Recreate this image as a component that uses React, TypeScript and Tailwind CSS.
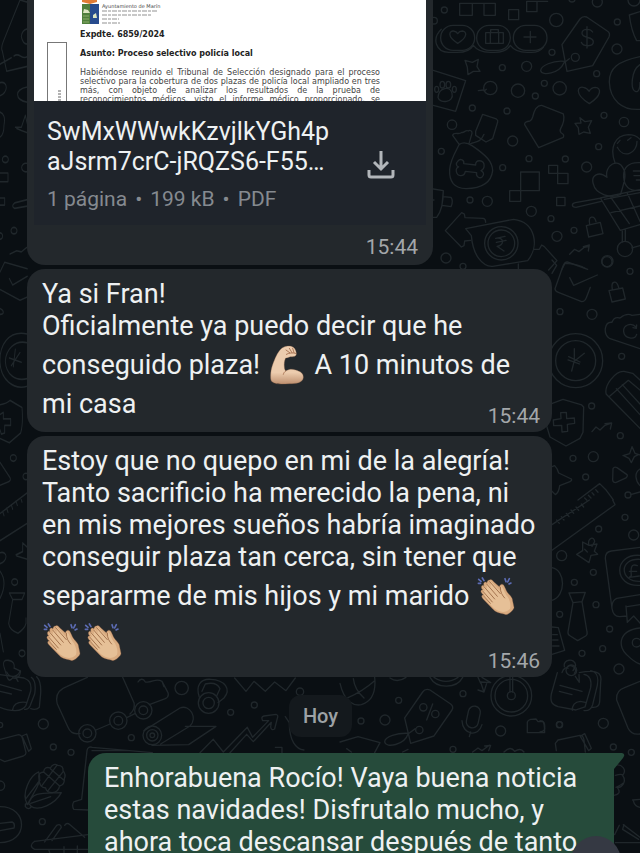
import React from 'react';

type Dot = [number, number, number];

const upperDots: Dot[] = [
  [43, 30, 9], [379, 60, 20], [562, 66, 9], [561, 147, 15], [366, 157, 9], [290, 199, 15], [217, 203, 9], [500, 221, 9],
  [343, 250, 9], [264, 272, 20], [389, 265, 20], [181, 264, 20], [316, 288, 9], [127, 324, 9], [231, 333, 9], [522, 346, 9],
  [582, 366, 14], [66, 374, 14], [248, 423, 15], [506, 440, 9], [34, 454, 9], [297, 476, 9], [406, 477, 9], [470, 501, 15],
  [218, 503, 9], [120, 600, 9], [172, 604, 15], [304, 634, 15], [363, 656, 9], [432, 691, 9], [381, 709, 15], [48, 774, 15],
  [99, 799, 9], [531, 785, 15], [502, 6, 15], [426, -3, 9], [612, 0, 18], [12, 62, 10], [585, 747, 23],
];

const middleDots: Dot[] = [
  [202, 4, 17], [270, 34, 9], [60, 155, 9], [156, 163, 15], [245, 289, 9], [155, 438, 9], [241, 527, 9], [99, 595, 9],
  [160, 590, 15], [137, 651, 9], [264, 705, 9],
];

const lowerDots: Dot[] = [
  [255, 52, 9], [176, 87, 9], [281, 105, 15], [65, 167, 15], [160, 217, 9], [103, 247, 9], [168, 314, 9], [59, 343, 9],
  [209, 387, 9], [188, 446, 9], [126, 460, 9], [237, 507, 15], [59, 674, 9], [190, 670, 15], [220, 741, 9], [274, 757, 9],
];

const bottomLeftDots: Dot[] = [
  [130, 162, 15], [160, 231, 9], [213, 247, 9], [394, 203, 9], [545, 54, 20], [692, 127, 9], [763, 105, 9], [127, 455, 9],
  [0, 347, 14], [0, 165, 8], [262, 190, 26], [262, 190, 13], [355, 152, 26], [355, 152, 13], [430, 121, 26], [430, 121, 13],
  [457, 196, 28], [457, 196, 17], [457, 196, 7], [626, 99, 31], [626, 99, 17], [900, 65, 11],
];

const bottomRightDots: Dot[] = [
  [63, 153, 9], [135, 150, 15], [176, 91, 9], [369, 71, 9], [482, 183, 15], [658, 164, 9], [339, 238, 9], [514, 77, 61],
  [514, 77, 49], [514, 77, 12], [250, 112, 11], [286, 132, 11], [238, 180, 11],
];

function Dots({ dots }: { dots: Dot[] }) {
  return (
    <>
      {dots.map(([x, y, r], i) => (
        <circle key={i} cx={x} cy={y} r={r} />
      ))}
    </>
  );
}

function Wallpaper() {
  return (
    <svg
      aria-hidden="true"
      className="absolute inset-0 h-full w-full"
      viewBox="0 0 640 853"
      preserveAspectRatio="xMidYMin slice"
      fill="none"
      stroke="#20272b"
      strokeLinecap="round"
      strokeLinejoin="round"
    >
      {/* Upper right */}
      <g transform="translate(430 0) scale(.3333)" strokeWidth="4">
        <Dots dots={upperDots} />
        <path d="M89 10h38v36H89zM162 10h34v36h-34zM127 10h35M236 29h30v30h-30zM290 4h31v31h-31zM321 4h32" />
        <rect x="32" y="76" width="102" height="75" rx="37" />
        <rect x="140" y="76" width="101" height="75" rx="37" />
        <rect x="250" y="76" width="101" height="75" rx="37" />
        <path d="M34 88c-30 28-16 69 22 69h26c23 0 39-5 48-21c12 16 28 21 50 21h14c23 0 38-6 47-21c12 16 27 21 50 21h14c14 0 26-4 35-15" />
        <path d="M83 130C48 108 60 92 70 93q10 1 13 8q5-8 14-8c13 1 18 18-14 37zM167 98h53v32h-53zM181 98v32M206 98v32M182 97v-8h23v8M301 94v34M282 111h36" />
        <path d="M411 214L396 134L450 57q8-10 20-6L532 93q10 6 5 18L488 197L411 214zM404 184c-36-4-72 14-72 28c4 18 56 8 70-24l16-12" />
        <circle cx="436" cy="172" r="12" />
        <path d="M488 96c-8-12-32-10-32 4c0 17 34 8 34 25c0 15-30 17-36 2M471 80v64" />
        <path d="M105 181l22 6 18-9-4 22 9 14-20 0-16 10-2-22zM145 272l16-2M163 273l6-5" />
        <path d="M10 211l97 31-30 92-67-18" />
        <path d="M24 292c3-32 37-34 42-12c8 28-38 32-42 12z" />
        <ellipse cx="37" cy="254" rx="7" ry="10" />
        <ellipse cx="55" cy="254" rx="7" ry="10" />
        <ellipse cx="20" cy="268" rx="6" ry="9" />
        <ellipse cx="73" cy="268" rx="6" ry="9" />
        <path d="M478 311c-49-31-33-54-18-49q12 2 17 12q7-12 19-12c18 1 21 24-18 49z" />
        <path d="M158 343l41 14q6 4 4 9l-15 50-20 10-31-20 0-12zM162 403c-12 28-26 20-42 29" />
        <path d="M88 434l-20-28c4-12 20 0 27-9c7 4 11-9 20-4c5-4 12 0 11 7l-9 31M88 433c11-7 26-4 38 4c44 30 61 48 62 75c-4 35-30 53-80 54c-35-1-51-20-49-58c2-29 19-55 29-75" />
        <path d="M101 491c3-11-10-17-17-8c-9 8-4 17 2 18c-12 4-8 25 5 26c11 1 14-8 15-13l34 4c-3 11 8 20 17 12c8-8 2-15-4-18c13-5 12-26 0-29c-13-3-17 5-16 12z" />
        <path d="M326 443L284 374q-2-9 16-11q5-2 8-12q8-36 27-35l65 26q6 18-8 44q-4 8 2 13q10 5 6 13z" />
        <path d="M450 353l15 12 20-3-10 20 6 18-20-4-14 7-2-19-10-14 18-1zM272 516h56v56h-56zM239 572h33v32h-33zM356 496h27v24h-27zM383 520h31v31h-31zM380 592h25v25h-25z" />
        <path d="M598 45l32-10M598 45q6 48 22 77h10M630 170c-66 14-92 34-92 76c2 54 38 86 92 82M630 194c-27 17-29 74-14 80c12 5 14-15 14-27" />
        <path d="M555 488c-17-45 0-82 40-84q22 0 35 14M562 442c18 36 60 18 59-18M562 430l8-9M593 421l10-8" />
        <path d="M490 552c-8-25 16-41 41-20c-9-35 34-60 48-28c14 18 0 53-7 79c-28 14-76 0-82-31zM630 488c-36-2-51 16-49 44c2 28 17 42 49 39M610 513h20M612 527h18M619 540h11" />
        <path d="M630 569l-119 25 60 97 59-17M523 598l107-20M543 593l55 78M592 580l38 84M543 638l87-20M515 594l-79 14c-12 2-12 14 2 14l76-18M577 692v34M586 690v34M606 744l24-7" />
        <path d="M469 677l42-10 8 34-43 10zM479 671c-5-24 14-26 19-6M419 763l15-15 13 7 16-13 12-2M460 740l18-5-3 18" />
        <path d="M10 567l30 5c0 26-4 60-20 80H10M40 572l-4 44M39 590l24 2q8 10 0 28l-27-4M12 600h-2M46 692l49-54 8 4 2 11 55 2q7 2 7 12M46 692l48 49 8-4 2-14 18-2" />
        <path d="M107 686l144-28c66 8 78 80 42 124L188 799c-30 2-59-32-64-92z" />
        <circle cx="214" cy="730" r="50" />
        <circle cx="214" cy="730" r="40" />
        <path d="M197 715l28-6M199 727l29-6M197 715c26-6 27 22 4 24l21 14M311 748h17l7-13 8 5 38 42-25 28M395 810l10-20q44 2 60 15M265 792v18" />
      </g>

      {/* Right edge, middle */}
      <g transform="translate(540 260) scale(.3333)" strokeWidth="4">
        <Dots dots={middleDots} />
        <path d="M143 28L82 6Q75 5 69 18L45 86q0 7 10 11l70 28q10 0 14-12l12-31M89 53l12 23 71-31M36 40l14-24L36 0" />
        <path d="M207 92l41-8 8 33-40 9zM217 88c-5-26 13-29 19-5" />
        <path d="M300 266l-92-31c-20-15-14-50 8-48q6-18 24-13q20-16 36-8l24-3M289 202c-17-18-40-5-38 13c2 21 34 26 39 8M290 195l-1 10-10-2" />
        <circle cx="107" cy="302" r="81" />
        <circle cx="107" cy="302" r="60" />
        <path d="M103 266v36l-8 31M103 304l30-24M86 290l34 16M84 300l34 12" />
        <path d="M199 403c-8-26 27-71 53-69l26 6 22 20M199 403l101 102M207 410l58-49 35 29M229 386l71 78M247 374l53 58" />
        <path d="M20 498c8-20 8-49 15-67l34-13 56 17 6 6-2 76-9 18-42 23-48-27zM62 458l17-1 1 19 23-2 1 16-22 3 1 21-17 2-1-20-24 1-1-17 23-4z" />
        <path d="M156 515l12-14 12 9 15-14 15-5M195 491l20-2-4 18M249 587l20-6 7-21 9 20 15 5M251 587l16 8 7 13 9-18 12-6" />
        <path d="M219 626q4-7 12-3l30 21q3 5-3 10l-31 14q-8 0-9-8zM300 627c-18 10-14 36 0 50M272 704l28-8M36 620l8-3q8 8 12 22l38 18q4 6-10 10l-25 10q-2 20-13 27l-10-10" />
        <path d="M114 720l65-49 20 20 21 29M134 714l7 7M145 706l8 8M156 698l6 7M167 689l7 8" />
      </g>

      {/* Right edge, lower */}
      <g transform="translate(540 500) scale(.3333)" strokeWidth="4">
        <Dots dots={lowerDots} />
        <path d="M36 74L148 0M36 151L225 14l-7-14M50 60l8 10M64 50l8 10M79 40l8 10M93 30l8 10M108 21l8 10M124 12l7 9" />
        <path d="M110 163l18-11 0-26 19 10 24-4-8 22 10 9-20 3-6 22zM146 134c-3-22 17-26 18-9l-8 14M134 148l8 8" />
        <path d="M300 142l-86 11q-18 2-18 22l20 150q4 26 24 25l20-2M300 284l-70 11q-16 8-14 30M300 166c-82-6-80 96 0 90M300 178c-64-4-62 68 0 66M292 197c-20-8-20 10-18 30l-6 5 30-4M268 214h22M258 318l4 49 19-19 19 21M262 320l38-6" />
        <path d="M36 203c42 8 42 86 0 98M87 279l49-2-10 28-27 3zM99 308L84 396q-1 8 7 12l22 14 24-14q6-4 4-12l-15-91M36 381l19 2 19 68-38 12M38 404h14M38 420h16M38 438h19" />
        <path d="M300 384c-70 8-64 60-40 80q24 24 40 28" />
        <circle cx="290" cy="428" r="13" />
        <path d="M52 518L34 582c-4 24 2 33 20 38l54 10 27-9 17-58c4-26-4-37-20-40M97 631q-1-24 24-27l15 3M152 512c20 4 24 24 20 44l-14 58q-6 20-26 18M118 518q38-8 54 0q14 6 10 30l-3 58q-2 18-22 16M60 556l66 18M58 574l38 10" />
        <circle cx="94" cy="511" r="16" />
        <path d="M73 500c-6-22 32-28 34-4l-8 16M83 500c12-10 32 8 20 20M66 518c5-15 14-17 18-13M106 529l12 18-1-23" />
        <path d="M300 544l-48 20q-24 8-22 36l34 84q10 22 36 18M49 752l-3-22 8-10 66-14q10 0 12 14l4 36M121 709l13-8 20 44-8 7zM0 662q16 0 14 20q2 12-14 14" />
      </g>

      {/* Below the last received message */}
      <g transform="translate(0 670) scale(.3333)" strokeWidth="4">
        <Dots dots={bottomLeftDots} />
        <path d="M0 112c30 12 66 16 78-6l14-42c4-26-6-34-20-40L0 14M38 119q4-26 40-22M94 22q16 12 10 50l-14 36q-6 12-16 10M110 20q14 14 12 50l-4 42q-10 10-26 4M0 44l64 18M0 64l34 8M20 6c8 20 36 16 40-4M46 20l8 14" />
        <path d="M262 22l-62 28q-38 14-28 52l32 70q10 24 36 18M288 180l42-18M382 142l24-12M368 22l34 76q4 20-12 34M414 36c6-10 16-12 22 0c22 4 30-14 50-2l18 34q4 12-8 18l-48 18M486 34l6 16M0 208l56-14q10 2 12 14l10 40q0 6-8 10L14 275 0 268M66 198l14-6 14 44-8 8z" />
        <path d="M432 182l108-68c30-12 54 30 30 54l-88 54M556 169h92l-82 55-110 2" />
        <path d="M598 82c-12-36 4-56 34-54c44 2 62 30 40 56l-18 14M606 64l10-22q34-8 44 14l-10 22" />
        <path d="M704 24l34 40 24-30 34 30 28-28 34 26 28-38M600 248l40-40 30 38 72-74 16 30 48-50-18 0q-6-12 4-14l36-5q8 2 4 12l-8 32q-10 6-12-6l2-14-54 58-20-22-56 62M856 140l12 18c0 54 20 80 44 82M826 232h20v18M265 420l-44-2q-6-12 0-22l24-8 16-146q2-14 16-10l180 16M276 242h110" />
        <path d="M82 404c-20-36 10-88 34-98q8 22-6 48zM86 402c10-38 42-32 98-34c-18 34-70 58-92 40M76 388l44-58M92 400l60-20M76 402q10-6 18 8q-8 12-18 0z" />
        <path d="M117 326q-4-18 14-20q2-18 20-12q10-16 22-8q18 0 16 16q10 12 4 24q2 18-14 22q-4 20-22 20q-18 0-20-14q-20-2-20-28zM131 306l48 42M151 296l40 34M170 287l-46 62M190 304l-46 58" />
        <path d="M0 410c86 0 86 108 0 108M0 460l36-4q10 4 6 18L0 482M104 514q-20 14 0 24h160M104 514l160-20M134 516l36-50q12-6 14 6l-28 40M194 466q6-10 16-2l44 38M192 530v20M232 528v24M146 538l6 20" />
      </g>

      <g transform="translate(340 670) scale(.3333)" strokeWidth="4">
        <Dots dots={bottomRightDots} />
        <path d="M0 40c14 60 44 68 64 64c34-10 44-42 40-82M18 86q50-22 86-54M40 26q4 34 32 58M150 24q22 16 48-2M270 22c20 36 80 34 98 0M282 22q36 24 72 0M510 20v46M518 20v46M414 22l8 18M426 22l26 16-30-2 10 30-18-6M440 40l-8 26" />
        <path d="M212 220l-18-76 54-78q8-12 22-6l62 42q10 8 4 18l-54 78zM206 190c-34-2-72 10-72 26c4 20 60 8 70-24l22-16M278 102l-18 48" />
        <rect x="382" y="108" width="36" height="66" rx="18" transform="rotate(12 400 141)" />
        <path d="M366 152c2 44 50 50 60 12M392 186l-4 14M562 188v-32q2-6 10-8l16-1 6 8 14-1q6 4 6 34zM398 246l16-12 12 8 22-16M434 228l18-2-6 16M492 246q20-20 32-2q18-12 28 2M0 216l54-16 66 18-16 30M20 236l14 10M188 246l16-8" />
        <path d="M824 286c22-6 38 14 24 30c14 20-4 38-16 36c10 14 6 22-10 24M826 316q20-6 22 0M828 352q18-8 20-12M878 390l22-2M880 392q4 18 20 20M824 494l14-28M850 464l50 38M852 464l-4 14 48 30M826 518h74" />
      </g>

      {/* Left edge strip */}
      <g transform="scale(.3333 .544)" strokeWidth="3">
        <path d="M60 0L10 76q-8 12-3 18l13 37 62-9M60 0l22 4M82 53q-16 2-18 14q4 14 18 14M82 104c-16 8-24-10-40-1M0 118l34-12M0 152c26-4 24 20 0 24M82 160c-40 4-38 24 0 28M0 206q18 4 12 24q0 18-12 22M46 234h18l12-22 6 16M50 236l14 4 18 4M0 318h24v16H0M0 364h14v13H0M82 367l-38 6q-12 6 0 10l38-4M30 467l20-6 14 2 16-8M0 500l14-18 68 12M28 512l10 12 44-16M0 532l60 20 22-6M0 567q10 3 10 7T0 578" />
        <path d="M82 614C24 606-2 636 0 666c2 30 38 52 82 44M82 630c-40-6-64 14-66 34c2 24 30 38 66 32M46 642l-6 32M28 658l36 8M60 648L34 672" />
        <path d="M0 744q20-2 30-8l36 13q4 30-4 47L28 814 0 806M0 762l10-4v12h22v12H14v14l-10 2-4-8M0 850l30 28q4 6-6 8L0 892M0 944l82-38M0 994l82-32M8 940l4 8M20 934l4 8M34 928l4 8M48 921l4 8M62 915l4 8M0 1016c24-4 24 16 0 20M48 1020l20-6 0-16 14 8M50 1022l32 6" />
        <path d="M0 1050q24 20 0 50M28 1090h46l-8 12H38zM38 1102l-12 44q2 12 28 18 20-8 24-18l0-10M0 1164l10 34M12 1226q-6-14 14-12q20 2 16 14l20 6q-4 16-24 12q-12 10-18-4z" />
        <ellipse cx="16" cy="293" rx="9" ry="6" />
        <ellipse cx="42" cy="424" rx="9" ry="6" />
        <ellipse cx="0" cy="434" rx="8" ry="6" />
        <ellipse cx="78" cy="308" rx="13" ry="8" />
        <ellipse cx="40" cy="842" rx="9" ry="6" />
        <ellipse cx="78" cy="876" rx="9" ry="6" />
        <ellipse cx="44" cy="1070" rx="9" ry="6" />
        <ellipse cx="66" cy="1201" rx="9" ry="6" />
      </g>
    </svg>
  );
}

function Biceps() {
  return (
    <svg role="img" aria-label="Bíceps" viewBox="21 6 123 138" className="inline-block h-[46px] w-[41px] align-[-14px]">
      <defs>
        <linearGradient id="arm" x1="0" y1="0" x2="0" y2="1">
          <stop offset="0" stopColor="#ecccae" />
          <stop offset="0.7" stopColor="#ecccae" />
          <stop offset="1" stopColor="#be9070" />
        </linearGradient>
      </defs>
      <path
        d="M32 115C31 91 37 75 43 61C50 43 60 25 72 21c8-3 20-5 28 1c6 4 10 15 9 21c-1 7-10 8-18 7c-6 3-10 3-14 4c-4 8-5 18-4 27c0 5 2 9 4 12c9-6 20-7 30-3c14 4 24 10 23 23c-2 15-20 18-42 18c-24 1-56 5-56-16z"
        fill="url(#arm)"
        stroke="#8f6448"
        strokeWidth="1"
      />
      <path d="M77 93c-4 3-6 6-7 10M78 30l11 8M88 25l8 13M98 25l4 13M79 43c8-5 20-5 28-3" fill="none" stroke="#a06a49" strokeWidth="2.5" strokeLinecap="round" />
    </svg>
  );
}

function Clap() {
  return (
    <svg role="img" aria-label="Aplausos" viewBox="21 12 123 138" className="inline-block h-[46px] w-[41px] align-[-14px]">
      <g stroke="#5c6cb4" strokeWidth="5" strokeLinecap="round">
        <path d="M40 27l5 8M29 31l7 6M28 43h7M108 29l3 9M121 29l-5 10M126 42l-6 3" />
      </g>
      <path
        d="M61 33c5-4 9 0 13 5l17 15c2-7 8-10 13-5c5 8 6 15 12 23c5 7 15 14 15 25l4 19c1 7-17 22-24 22c-11-4-27-3-39-16L43 91c-8-9-5-13 0-13c-10-9-9-15-2-15c-8-9-2-17 4-13c-4-9 4-14 9-9c0-4 3-8 7-8z"
        fill="#d9ab80"
        stroke="#8a5c3f"
        strokeWidth="1"
      />
      <path d="M64 36l31 32c-2-8-3-14 2-16c7 6 9 21 20 33c7 13 9 25 6 34c-15 16-34 10-49-2L43 83c-3-6 3-4 7 1L40 67c1-4 5-3 8 0l-4-13c4-3 7 0 10 5l-1-14c6-2 9 5 12 9z" fill="#e6c097" />
      <path d="M62 38l32 36M53 45l32 37M45 53l32 37M41 66l29 33M43 80l21 23M94 55c0 16 6 24 13 32" fill="none" stroke="#a5744f" strokeWidth="3" strokeLinecap="round" />
    </svg>
  );
}

function Thumbnail() {
  return (
    <div className="flex h-[101px] overflow-hidden bg-white pl-[13px] text-[#222] [font-family:'DejaVu_Sans',sans-serif]">
      <div className="mt-[42px] flex h-20 w-5 shrink-0 items-start justify-end border border-[#777] pt-[46px] pr-1">
        <svg aria-hidden="true" width="4" height="12" viewBox="0 0 4 12">
          <path d="M0 2h4M0 5h4M0 8h4M0 11h4" stroke="#666" strokeWidth="1" strokeDasharray="3 1" />
        </svg>
      </div>
      <div className="ml-[13px] w-[300px]">
        <div className="flex h-[30px] gap-[2px]">
          <svg aria-hidden="true" width="20" height="25" viewBox="0 0 20 25" className="shrink-0">
            <path d="M2 0h15v2l-7 2-8-2z" fill="#e07c35" />
            <path d="M2 4h8v20H2z" fill="#4f7f3c" />
            <path d="M10 4h9v20h-9z" fill="#274b8e" />
            <path d="M4 9l4 1 2 3H3zM13 15l3-2 1 5h-4z" fill="#dce5c1" />
            <path d="M3 16h6M3 19h6M3 22h6" stroke="#8cad69" />
          </svg>
          <div className="pt-[3px]">
            <p className="text-[5px] leading-[6px] whitespace-nowrap text-[#444]">Ayuntamiento de Marín</p>
            <svg aria-hidden="true" width="56" height="16" viewBox="0 0 56 16">
              <path d="M0 2h55M0 6h50M0 10h17M0 14h18" stroke="#c8c8c8" strokeWidth="2" strokeDasharray="5 1 3 1" />
            </svg>
          </div>
        </div>
        <p className="text-[8px] leading-[10px] font-bold">Expdte. 6859/2024</p>
        <p className="mt-[9px] text-[8px] leading-[10px] font-bold">Asunto: Proceso selectivo policía local</p>
        <div className="mt-[9px] text-[8px] leading-[9px] whitespace-nowrap text-[#444] [text-align-last:justify]">
          <p>Habiéndose reunido el Tribunal de Selección designado para el proceso</p>
          <p>selectivo para la cobertura de dos plazas de policía local ampliado en tres</p>
          <p>más, con objeto de analizar los resultados de la prueba de</p>
          <p>reconocimientos médicos, visto el informe médico proporcionado, se</p>
        </div>
      </div>
    </div>
  );
}

function Time({ children }: { children: string }) {
  return <time className="block text-right text-[21px] leading-6 text-[#a3a7aa]">{children}</time>;
}

export default function App() {
  return (
    <div className="relative h-screen overflow-hidden bg-[#0a0f13] text-[27px] leading-8 text-[#eef1f2] [font-family:Roboto,sans-serif]">
      <Wallpaper />

      <main className="relative flex flex-col items-start gap-1 pr-[26px] pl-[27px]">
        {/* Attached document */}
        <article className="w-[406px] rounded-b-[18px] bg-[#23282c] px-[7px] pb-[6px]">
          <Thumbnail />
          <div className="flex h-[124px] items-center bg-[#1f242b] pt-1 pr-[30px] pl-[13px]">
            <div className="min-w-0 flex-1">
              <p className="text-[25px] leading-[30px]">
                SwMxWWwkKzvjlkYGh4p
                <br />
                aJsrm7crC-jRQZS6-F55…
              </p>
              <p className="mt-2 flex gap-2 text-[21px] leading-7 text-[#858a90]">
                <span>1 página</span>
                <span>•</span>
                <span>199 kB</span>
                <span>•</span>
                <span>PDF</span>
              </p>
            </div>
            <button type="button" aria-label="Descargar" className="shrink-0">
              <svg width="30" height="30" viewBox="0 0 30 30" fill="none" stroke="#b2b6ba" strokeWidth="3">
                <path d="M15 1v17M8 12l7 7 7-7" />
                <path d="M3 20v5q0 2 2 2h20q2 0 2-2v-5" />
              </svg>
            </button>
          </div>
          <div className="pt-[10px] pr-2">
            <Time>15:44</Time>
          </div>
        </article>

        <article className="w-[525px] rounded-[18px] bg-[#23282c] pt-[9px] pr-3 pb-1 pl-[15px]">
          <p className="whitespace-nowrap">
            Ya si Fran!
            <br />
            Oficialmente ya puedo decir que he
            <br />
            conseguido plaza! <Biceps /> A 10 minutos de
            <br />
            mi casa
          </p>
          <div className="-mt-4">
            <Time>15:44</Time>
          </div>
        </article>

        <article className="w-[525px] rounded-[18px] bg-[#23282c] pt-[9px] pr-3 pb-1 pl-[15px]">
          <p className="whitespace-nowrap">
            Estoy que no quepo en mi de la alegría!
            <br />
            Tanto sacrificio ha merecido la pena, ni
            <br />
            en mis mejores sueños habría imaginado
            <br />
            conseguir plaza tan cerca, sin tener que
            <br />
            separarme de mis hijos y mi marido <Clap />
            <br />
            <Clap />
            <Clap />
          </p>
          <div className="-mt-4">
            <Time>15:46</Time>
          </div>
        </article>

        <p className="mt-[14px] self-center rounded-[12px] bg-[#14191d] px-[14px] py-[5px] text-[20px] font-medium text-[#9da2a6]">Hoy</p>

        <article className="relative mt-3 w-[526px] self-end rounded-tl-[18px] bg-[#264b3b] px-4 pt-[9px]">
          <svg aria-hidden="true" width="12" height="17" viewBox="0 0 12 17" className="absolute top-0 -right-[11px]">
            <path d="M0 0h9q4 1 1 5L1 16H0z" fill="#264b3b" />
          </svg>
          <p className="whitespace-nowrap">
            Enhorabuena Rocío! Vaya buena noticia
            <br />
            estas navidades! Disfrutalo mucho, y
            <br />
            ahora toca descansar después de tanto
          </p>
        </article>
      </main>

      <button type="button" aria-label="Ir al final" className="absolute right-[19px] -bottom-[33px] h-[50px] w-[50px] rounded-full bg-[#353943]" />
    </div>
  );
}
